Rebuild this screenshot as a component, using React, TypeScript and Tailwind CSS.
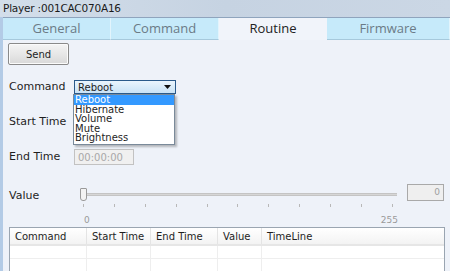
import React from 'react';

const tabs = ['General', 'Command', 'Routine', 'Firmware'];
const options = ['Reboot', 'Hibernate', 'Volume', 'Mute', 'Brightness'];
const columns = [
  { label: 'Command', w: 'w-[77px]' },
  { label: 'Start Time', w: 'w-[64px]' },
  { label: 'End Time', w: 'w-[67px]' },
  { label: 'Value', w: 'w-[44px]' },
  { label: 'TimeLine', w: 'flex-1' },
];

export default function App() {
  return (
    <div className="w-[450px] h-[271px] overflow-hidden bg-[#eef2f9] text-[11px] text-[#1e1e1e] font-['DejaVu_Sans',sans-serif] flex flex-col">
      {/* Title bar */}
      <div className="h-[17px] shrink-0 bg-gradient-to-r from-[#d3deea] via-[#c6d3e2] to-[#cbd7e5] flex items-center pl-[3px] text-[10.5px] tracking-[-0.2px] text-[#1a1a1a]">
        Player :001CAC070A16
      </div>

      <div className="flex-1 flex border-l-[3px] border-[#b3cbe6]">
        <div className="flex-1 flex flex-col">
          {/* Tabs */}
          <div className="h-[23px] shrink-0 flex border-t border-[#8fa4bd]">
            {tabs.map((t, i) => (
              <div
                key={t}
                className={`${i === 3 ? 'flex-1' : 'w-[108px]'} flex items-center justify-center font-['Open_Sans',sans-serif] text-[13px] ${
                  t === 'Routine'
                    ? 'bg-[#f1f4fa] text-[#222]'
                    : 'bg-[#c6eafa] text-[#6b7b86] border-b border-[#a6c9dc] border-r border-r-[#e2f4fc]'
                }`}
              >
                {t}
              </div>
            ))}
          </div>

          {/* Content */}
          <div className="flex-1 flex flex-col pl-[5px] pr-[5px]">
            <button className="mt-[3px] w-[61px] h-[22px] rounded-[2px] border border-[#8a8a8a] bg-gradient-to-b from-[#f5f5f5] to-[#d9d9d9] text-[10px] shadow-[inset_0_0_0_1px_#fbfbfb]">
              Send
            </button>

            {/* Command row */}
            <div className="mt-[15px] flex items-center h-[14px] relative">
              <span className="w-[66px] pl-[1px]">Command</span>
              <div className="w-[102px] h-[14px] border border-[#2a5a8a] bg-gradient-to-b from-[#eaf5fd] to-[#c9e3f6] flex items-center justify-between pl-[3px] pr-[4px] text-[10px]">
                <span>Reboot</span>
                <svg width="7" height="4" viewBox="0 0 7 4"><path d="M0 0h7L3.5 4z" fill="#111" /></svg>
              </div>
              <div className="absolute left-[65px] top-[14px] w-[102px] bg-white border border-[#7a8a9a] shadow-[2px_2px_2px_rgba(0,0,0,0.25)] z-10 text-[10px] leading-[9.5px] pb-[1px]">
                {options.map((o, i) => (
                  <div
                    key={o}
                    className={`pl-[1px] h-[9.5px] ${i === 0 ? 'bg-[#3399ff] text-white' : ''}`}
                  >
                    {o}
                  </div>
                ))}
              </div>
            </div>

            <div className="mt-[21px] h-[14px] flex items-center pl-[1px]">Start Time</div>

            <div className="mt-[20px] flex items-center h-[16px]">
              <span className="w-[66px] pl-[1px]">End Time</span>
              <div className="w-[60px] h-[16px] border border-[#c2c2c2] bg-[#f0f0f0] text-[#a8a8a8] text-[10px] flex items-center pl-[3px]">
                00:00:00
              </div>
            </div>

            {/* Value slider */}
            <div className="mt-[20px] flex items-start">
              <span className="w-[70px] pl-[1px] mt-[3px]">Value</span>
              <div className="w-[320px] flex flex-col pt-[3px]">
                <div className="relative h-[13px] flex items-center">
                  <div className="ml-[5px] w-[314px] h-[3px] bg-[#d6d6d6] border-y border-[#c4c4c4]" />
                  <div className="absolute left-[2px] top-0 w-[7px] h-[13px] bg-[#f3f3f3] border border-[#9a9a9a] rounded-b-[3px] rounded-t-[1px]" />
                </div>
                <div className="flex justify-between ml-[5px] w-[310px] mt-[3px]">
                  {Array.from({ length: 11 }).map((_, i) => (
                    <div key={i} className="w-px h-[3px] bg-[#b8b8b8]" />
                  ))}
                </div>
                <div className="flex justify-between w-[320px] mt-[9px] text-[9px] text-[#9a9a9a] leading-none">
                  <span className="ml-[6px]">0</span>
                  <span>255</span>
                </div>
              </div>
              <div className="ml-[9px] -mt-[1px] w-[37px] h-[17px] border border-[#a9a9a9] bg-[#efefef] text-[#a0a0a0] text-[9px] flex items-center justify-end pr-[3px]">
                0
              </div>
            </div>

            {/* Table */}
            <div className="mt-[2px] ml-[1px] flex-1 border border-[#9aa5b1] border-b-0 bg-white flex flex-col">
              <div className="h-[18px] flex bg-gradient-to-b from-[#ffffff] to-[#f3f3f3] border-b-2 border-[#e6e6e6]">
                {columns.map(c => (
                  <div key={c.label} className={`${c.w} pl-[5px] flex items-center border-r border-[#e4e4e4] last:border-r-0 text-[10px]`}>
                    {c.label}
                  </div>
                ))}
              </div>
              <div className="h-[13px] flex border-b border-[#eeeeee]">
                {columns.map(c => (
                  <div key={c.label} className={`${c.w} border-r border-[#eeeeee] last:border-r-0`} />
                ))}
              </div>
              <div className="flex-1 flex">
                {columns.map(c => (
                  <div key={c.label} className={`${c.w} border-r border-[#eeeeee] last:border-r-0`} />
                ))}
              </div>
            </div>
          </div>
        </div>
      </div>
    </div>
  );
}
